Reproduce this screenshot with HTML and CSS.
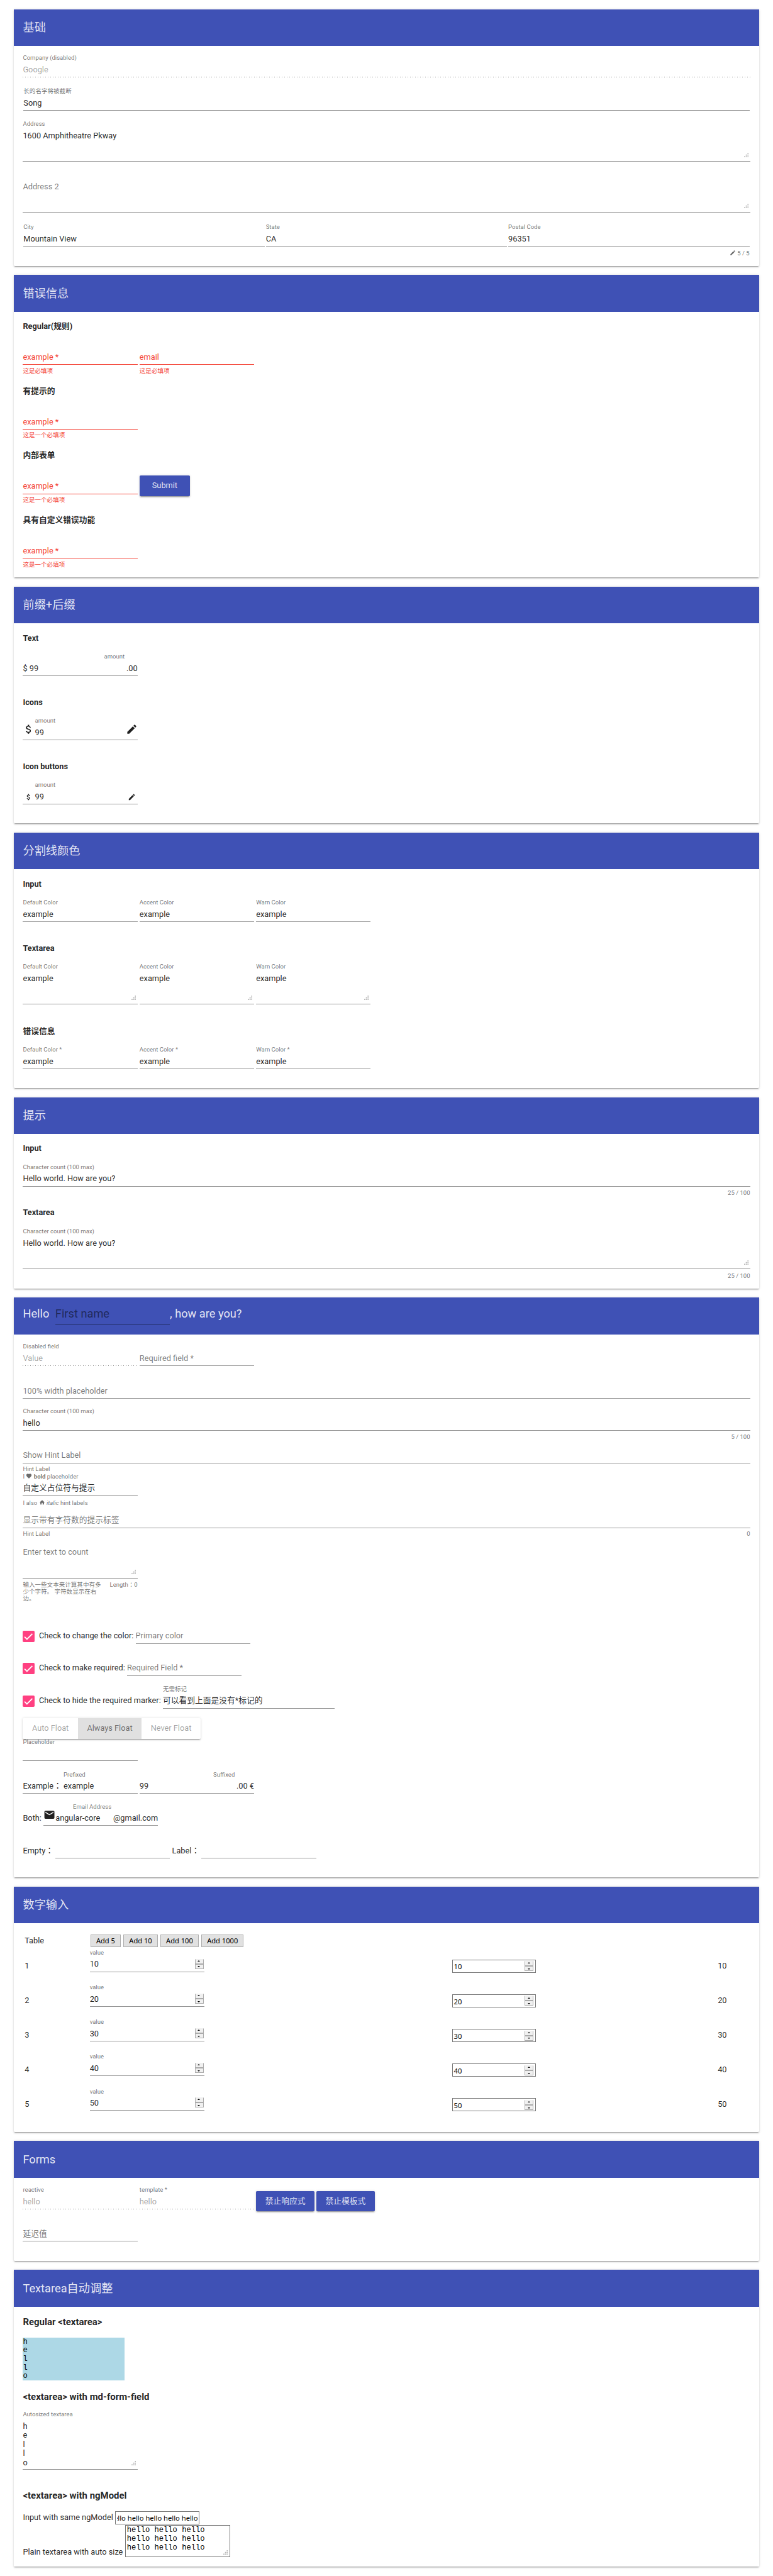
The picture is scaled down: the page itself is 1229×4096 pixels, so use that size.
FILE: index.html
```html
<!DOCTYPE html>
<html lang="zh-CN">
<head>
<meta charset="utf-8">
<title>Input</title>
<link rel="stylesheet" href="styles.css">
</head>
<body>
<svg class="defs" aria-hidden="true">
  <symbol id="edit" viewBox="0 0 24 24"><path d="M3 17.25V21h3.75L17.81 9.94l-3.75-3.75L3 17.25zM20.71 7.04a1 1 0 0 0 0-1.41l-2.34-2.34a1 1 0 0 0-1.41 0l-1.83 1.83 3.75 3.75 1.83-1.83z"/></symbol>
  <symbol id="money" viewBox="0 0 24 24"><path d="M11.8 10.9c-2.27-.59-3-1.2-3-2.15 0-1.09 1.01-1.85 2.7-1.85 1.78 0 2.44.85 2.5 2.1h2.21c-.07-1.72-1.12-3.3-3.21-3.81V3h-3v2.16c-1.94.42-3.5 1.68-3.5 3.61 0 2.31 1.91 3.46 4.7 4.13 2.5.6 3 1.48 3 2.41 0 .69-.49 1.79-2.7 1.79-2.06 0-2.87-.92-2.98-2.1h-2.2c.12 2.19 1.76 3.42 3.68 3.83V21h3v-2.15c1.95-.37 3.5-1.5 3.5-3.55 0-2.84-2.43-3.81-4.7-4.4z"/></symbol>
  <symbol id="heart" viewBox="0 0 24 24"><path d="M12 21.35l-1.45-1.32C5.4 15.36 2 12.28 2 8.5 2 5.42 4.42 3 7.5 3c1.74 0 3.41.81 4.5 2.09C13.09 3.81 14.76 3 16.5 3 19.58 3 22 5.42 22 8.5c0 3.78-3.4 6.86-8.55 11.54L12 21.35z"/></symbol>
  <symbol id="home" viewBox="0 0 24 24"><path d="M10 20v-6h4v6h5v-8h3L12 3 2 12h3v8z"/></symbol>
  <symbol id="mail" viewBox="0 0 24 24"><path d="M20 4H4a2 2 0 0 0-2 2v12a2 2 0 0 0 2 2h16a2 2 0 0 0 2-2V6a2 2 0 0 0-2-2zm0 4l-8 5-8-5V6l8 5 8-5v2z"/></symbol>
  <symbol id="check" viewBox="0 0 24 24"><path fill="none" stroke="#fff" stroke-width="2.4" d="M4.1 12.7L9 17.6 20.3 6.3"/></symbol>
  <symbol id="grip" viewBox="0 0 8 8"><path d="M6 0h2v2H6zM3 3h2v2H3zM6 3h2v2H6zM0 6h2v2H0zM3 6h2v2H3zM6 6h2v2H6z"/></symbol>
</svg>
<main class="page">

<section class="card basic">
  <h2>基础</h2>
  <div class="body">
    <div class="row h58"><div class="field wide disabled"><div class="box"><span class="label">Company (disabled)</span><span class="value">Google</span></div></div></div>
    <div class="row h57 cells"><div class="field wide"><div class="box"><span class="label">长的名字将被截断</span><span class="value">Song</span></div></div></div>
    <div class="row h89"><div class="field wide"><div class="box area"><span class="label">Address</span><span class="value">1600 Amphitheatre Pkway</span><svg class="grip"><use href="#grip"/></svg></div></div></div>
    <div class="row h91"><div class="field wide"><div class="box area"><span class="value ph">Address 2</span><svg class="grip"><use href="#grip"/></svg></div></div></div>
    <div class="row cells">
      <div class="field wide"><div class="box"><span class="label">City</span><span class="value">Mountain View</span></div></div>
      <div class="field wide"><div class="box"><span class="label">State</span><span class="value">CA</span></div></div>
      <div class="field wide"><div class="box"><span class="label">Postal Code</span><span class="value">96351</span></div><div class="hint end"><span><svg class="mini"><use href="#edit"/></svg> 5 / 5</span></div></div>
    </div>
  </div>
</section>

<section class="card errors">
  <h2>错误信息</h2>
  <div class="body">
    <h4>Regular(规则)</h4>
    <div class="row">
      <div class="field warn"><div class="box"><span class="value">example *</span></div><div class="hint">这是必填项</div></div>
      <div class="field warn"><div class="box"><span class="value">email</span></div><div class="hint">这是必填项</div></div>
    </div>
    <h4>有提示的</h4>
    <div class="row"><div class="field warn"><div class="box"><span class="value">example *</span></div><div class="hint">这是一个必填项</div></div></div>
    <h4>内部表单</h4>
    <div class="row"><div class="field warn"><div class="box"><span class="value">example *</span></div><div class="hint">这是一个必填项</div></div><button class="raised submit">Submit</button></div>
    <h4>具有自定义错误功能</h4>
    <div class="row"><div class="field warn"><div class="box"><span class="value">example *</span></div><div class="hint">这是一个必填项</div></div></div>
  </div>
</section>

<section class="card affixes">
  <h2>前缀+后缀</h2>
  <div class="body">
    <h4>Text</h4>
    <div class="row h75"><div class="field"><div class="box split"><span class="affix">$&nbsp;</span><div class="infix"><span class="label right">amount</span><span class="value">99</span></div><span class="affix">.00</span></div></div></div>
    <h4>Icons</h4>
    <div class="row h75"><div class="field"><div class="box split"><svg class="icon"><use href="#money"/></svg><div class="infix"><span class="label">amount</span><span class="value">99</span></div><svg class="icon"><use href="#edit"/></svg></div></div></div>
    <h4>Icon buttons</h4>
    <div class="row h75"><div class="field"><div class="box split"><svg class="icon small"><use href="#money"/></svg><div class="infix"><span class="label">amount</span><span class="value">99</span></div><svg class="icon small"><use href="#edit"/></svg></div></div></div>
  </div>
</section>

<section class="card dividers">
  <h2>分割线颜色</h2>
  <div class="body">
    <h4>Input</h4>
    <div class="row h75">
      <div class="field"><div class="box"><span class="label">Default Color</span><span class="value">example</span></div></div>
      <div class="field"><div class="box"><span class="label">Accent Color</span><span class="value">example</span></div></div>
      <div class="field"><div class="box"><span class="label">Warn Color</span><span class="value">example</span></div></div>
    </div>
    <h4>Textarea</h4>
    <div class="row h108">
      <div class="field"><div class="box area"><span class="label">Default Color</span><span class="value">example</span><svg class="grip"><use href="#grip"/></svg></div></div>
      <div class="field"><div class="box area"><span class="label">Accent Color</span><span class="value">example</span><svg class="grip"><use href="#grip"/></svg></div></div>
      <div class="field"><div class="box area"><span class="label">Warn Color</span><span class="value">example</span><svg class="grip"><use href="#grip"/></svg></div></div>
    </div>
    <h4>错误信息</h4>
    <div class="row">
      <div class="field"><div class="box"><span class="label">Default Color *</span><span class="value">example</span></div></div>
      <div class="field"><div class="box"><span class="label">Accent Color *</span><span class="value">example</span></div></div>
      <div class="field"><div class="box"><span class="label">Warn Color *</span><span class="value">example</span></div></div>
    </div>
  </div>
</section>

<section class="card hints">
  <h2>提示</h2>
  <div class="body">
    <h4>Input</h4>
    <div class="row h75"><div class="field wide"><div class="box"><span class="label">Character count (100 max)</span><span class="value">Hello world. How are you?</span></div><div class="hint end"><span>25 / 100</span></div></div></div>
    <h4>Textarea</h4>
    <div class="row"><div class="field wide"><div class="box area"><span class="label">Character count (100 max)</span><span class="value">Hello world. How are you?</span><svg class="grip"><use href="#grip"/></svg></div><div class="hint end"><span>25 / 100</span></div></div></div>
  </div>
</section>

<section class="card hello">
  <h2>Hello <span class="first-name">First name</span>, how are you?</h2>
  <div class="body">
    <div class="row h57">
      <div class="field disabled"><div class="box"><span class="label">Disabled field</span><span class="value">Value</span></div></div>
      <div class="field"><div class="box"><span class="value ph">Required field *</span></div></div>
    </div>
    <div class="row h56"><div class="field wide"><div class="box"><span class="value ph">100% width placeholder</span></div></div></div>
    <div class="row h57"><div class="field wide"><div class="box"><span class="label">Character count (100 max)</span><span class="value">hello</span></div><div class="hint end"><span>5 / 100</span></div></div></div>
    <div class="row h56"><div class="field wide"><div class="box"><span class="value ph">Show Hint Label</span></div><div class="hint">Hint Label</div></div></div>
    <div class="row h57"><div class="field"><div class="box"><span class="label low">I <svg class="mini"><use href="#heart"/></svg> <b>bold</b> placeholder</span><span class="value">自定义占位符与提示</span></div><div class="hint low">I also <svg class="mini"><use href="#home"/></svg> <i>italic</i> hint labels</div></div></div>
    <div class="row h56"><div class="field wide"><div class="box"><span class="value ph">显示带有字符数的提示标签</span></div><div class="hint"><span>Hint Label</span><span>0</span></div></div></div>
    <div class="row h146"><div class="field"><div class="box area"><span class="value ph">Enter text to count</span><svg class="grip"><use href="#grip"/></svg></div><div class="hint"><span class="wrap">输入一些文本来计算其中有多少个字符。 字符数显示在右边。</span><span>Length<span class="mid" lang="zh-TW">：</span>0</span></div></div></div>
    <div class="row check h56"><span class="tick"><svg><use href="#check"/></svg></span><span class="text">Check to change the color:</span><div class="field"><div class="box"><span class="value ph">Primary color</span></div></div></div>
    <div class="row check h57"><span class="tick"><svg><use href="#check"/></svg></span><span class="text">Check to make required:</span><div class="field"><div class="box"><span class="value ph">Required Field *</span></div></div></div>
    <div class="row check h56"><span class="tick"><svg><use href="#check"/></svg></span><span class="text">Check to hide the required marker:</span><div class="field long"><div class="box"><span class="label">无需标记</span><span class="value">可以看到上面是没有*标记的</span></div></div></div>
    <div class="toggle"><span>Auto Float</span><span class="on">Always Float</span><span>Never Float</span></div>
    <div class="row h57"><div class="field"><div class="box"><span class="label">Placeholder</span></div></div></div>
    <div class="row h56">
      <div class="field"><div class="box split"><span class="affix">Example<span class="mid" lang="zh-TW">：</span>&nbsp;</span><div class="infix"><span class="label">Prefixed</span><span class="value">example</span></div></div></div>
      <div class="field"><div class="box split"><div class="infix"><span class="label right">Suffixed</span><span class="value">99</span></div><span class="affix">.00 €</span></div></div>
    </div>
    <div class="row h57"><span class="text">Both:</span><div class="field"><div class="box split"><svg class="icon mail"><use href="#mail"/></svg><div class="infix"><span class="label right">Email Address</span><span class="value">angular-core</span></div><span class="affix">@gmail.com</span></div></div></div>
    <div class="row"><span class="text">Empty<span class="mid" lang="zh-TW">：</span></span><div class="field"><div class="box"></div></div><span class="text">Label<span class="mid" lang="zh-TW">：</span></span><div class="field"><div class="box"></div></div></div>
  </div>
</section>

<section class="card numbers">
  <h2>数字输入</h2>
  <div class="body">
    <div class="line head"><span>Table</span><span class="adds"><button>Add 5</button><button>Add 10</button><button>Add 100</button><button>Add 1000</button></span></div>
    <div class="line"><span class="num">1</span><div class="field"><div class="box"><span class="label">value</span><span class="value">10</span><span class="spin"></span></div></div><div class="native">10<span class="spin"></span></div><span class="num">10</span></div>
    <div class="line"><span class="num">2</span><div class="field"><div class="box"><span class="label">value</span><span class="value">20</span><span class="spin"></span></div></div><div class="native">20<span class="spin"></span></div><span class="num">20</span></div>
    <div class="line"><span class="num">3</span><div class="field"><div class="box"><span class="label">value</span><span class="value">30</span><span class="spin"></span></div></div><div class="native">30<span class="spin"></span></div><span class="num">30</span></div>
    <div class="line"><span class="num">4</span><div class="field"><div class="box"><span class="label">value</span><span class="value">40</span><span class="spin"></span></div></div><div class="native">40<span class="spin"></span></div><span class="num">40</span></div>
    <div class="line"><span class="num">5</span><div class="field"><div class="box"><span class="label">value</span><span class="value">50</span><span class="spin"></span></div></div><div class="native">50<span class="spin"></span></div><span class="num">50</span></div>
  </div>
</section>

<section class="card forms">
  <h2>Forms</h2>
  <div class="body">
    <div class="row h56">
      <div class="field disabled"><div class="box"><span class="label">reactive</span><span class="value">hello</span></div></div>
      <div class="field disabled"><div class="box"><span class="label">template *</span><span class="value">hello</span></div></div>
      <div class="actions"><button class="raised">禁止响应式</button><button class="raised">禁止模板式</button></div>
    </div>
    <div class="row"><div class="field"><div class="box"><span class="value ph">延迟值</span></div></div></div>
  </div>
</section>

<section class="card autosize">
  <h2>Textarea自动调整</h2>
  <div class="body">
    <h3>Regular &lt;textarea&gt;</h3>
    <pre class="blue">h
e
l
l
o</pre>
    <h3>&lt;textarea&gt; with md-form-field</h3>
    <div class="row h137"><div class="field"><div class="box tall"><span class="label">Autosized textarea</span><span class="value">h<br>e<br>l<br>l<br>o</span><svg class="grip"><use href="#grip"/></svg></div></div></div>
    <h3>&lt;textarea&gt; with ngModel</h3>
    <div class="plain"><span>Input with same ngModel</span><div class="native text-input"><span>hello hello hello hello hello</span></div></div>
    <div class="plain bottom"><span>Plain textarea with auto size</span><pre class="native multi">hello hello hello
hello hello hello
hello hello hello<svg class="grip"><use href="#grip"/></svg></pre></div>
  </div>
</section>

</main>
</body>
</html>
```
FILE: styles.css
```css
* { box-sizing: border-box; }
html, body { margin: 0; background: #fff; overflow: hidden; }
.defs { position: absolute; width: 0; height: 0; }

.page {
  zoom: 0.91103;
  width: 1349px;
  height: 4496px;
  padding: 16px 24px;
  display: flex;
  flex-direction: column;
  gap: 16px;
  font: 14px/16px Roboto, "Noto Sans CJK SC", sans-serif;
  color: rgba(0, 0, 0, .87);
}

/* Cards */
.card {
  flex: none;
  background: #fff;
  border-radius: 2px;
  box-shadow: 0 3px 1px -2px rgba(0,0,0,.2), 0 2px 2px 0 rgba(0,0,0,.14), 0 1px 5px 0 rgba(0,0,0,.12);
}
.basic { height: 448px; }
.errors { height: 528px; }
.affixes { height: 413px; }
.dividers { height: 446px; }
.hints { height: 334px; }
.hello { height: 1012px; }
.numbers { height: 428px; }
.forms { height: 209px; }
.autosize { height: 518px; }

h2 {
  margin: 0;
  height: 64px;
  padding: 0 16px;
  display: flex;
  align-items: center;
  background: #3f51b5;
  color: rgba(255, 255, 255, .87);
  font-size: 20px;
  font-weight: 400;
  line-height: 32px;
}
.body { padding: 16px 16px 0; }
h4 { margin: 0 0 17px; font-size: 14px; line-height: 20px; font-weight: 700; }
.errors h4 { margin-bottom: 18px; }
h3 { margin: 0; font-size: 16.4px; line-height: 20px; font-weight: 700; }

/* Rows */
.row { display: flex; gap: 3.5px; align-items: flex-start; height: 72px; }
.h56 { height: 56px; }
.h57 { height: 57px; }
.h58 { height: 58px; }
.h75 { height: 75px; }
.h89 { height: 89px; }
.h91 { height: 91px; }
.h108 { height: 108px; }
.h137 { height: 137px; }
.h146 { height: 146px; }
.errors .row { height: 74.67px; }
.cells { padding: 0 1px; gap: 2px; }

/* Form fields */
.field { flex: none; width: 200px; white-space: nowrap; }
.field.wide { flex: 1 1 0; }
.field.long { width: 300px; }
.box {
  position: relative;
  height: 39px;
  border-bottom: 1px solid #949494;
  display: flex;
  flex-direction: column;
}
.box.area { height: 71.5px; }
.box.tall { height: 102px; }
.label { flex: none; height: 18px; font-size: 10.5px; line-height: 12px; color: rgba(0, 0, 0, .58); }
.label.low { line-height: 13px; }
.label.right { align-self: flex-end; padding-right: 3px; }
.value { flex: none; line-height: 16px; }
.value:first-child { margin-top: 18px; }
.ph { color: rgba(0, 0, 0, .54); }
.disabled .value { color: rgba(0, 0, 0, .38); }
.disabled .box { border-bottom-color: transparent; }
.disabled .box::after {
  content: "";
  position: absolute;
  left: 0; right: 0; bottom: -1px;
  height: 1.1px;
  background: repeating-linear-gradient(to right, #808080 0 1.4px, transparent 1.4px 4.39px);
}
.warn .box { border-color: #f44336; }
.warn .value, .warn .hint { color: #f44336; }
.hint {
  display: flex;
  justify-content: space-between;
  margin-top: 5px;
  font-size: 10.5px;
  line-height: 12px;
  color: rgba(0, 0, 0, .58);
}
.hint.end { justify-content: flex-end; margin-top: 6px; }
.hint.low { display: block; margin-top: 7px; }
.wrap { width: 138px; white-space: normal; }
.mid { font-family: "Noto Sans CJK TC", sans-serif; line-height: 1; }
.mini { width: 11px; height: 11px; fill: currentColor; vertical-align: -1px; }
.grip { position: absolute; right: 3px; bottom: 7px; width: 8px; height: 8px; fill: #b4b4b4; }

/* Prefixes and suffixes */
.box.split { flex-direction: row; }
.infix { flex: 1; display: flex; flex-direction: column; }
.affix { padding-top: 18px; }
.icon { width: 21px; height: 21px; margin-top: 9px; fill: #212121; }
.icon.small { height: 14px; margin-top: 19px; }

/* Buttons */
.raised {
  border: 0;
  border-radius: 2px;
  height: 36px;
  padding: 0 16px;
  background: #3f51b5;
  color: rgba(255, 255, 255, .87);
  font: 14px/36px Roboto, "Noto Sans CJK SC", sans-serif;
  box-shadow: 0 3px 1px -2px rgba(0,0,0,.2), 0 2px 2px 0 rgba(0,0,0,.14), 0 1px 5px 0 rgba(0,0,0,.12);
}
.submit { width: 88px; margin-top: 7px; }
.actions { display: flex; gap: 3px; margin: 7px 0 0; }
.actions .raised { width: 102px; }

/* Greeting card */
.hello h2 { align-items: flex-start; padding-top: 12px; white-space: pre; }
.first-name {
  width: 200px;
  height: 36px;
  margin-left: 5.5px;
  border-bottom: 1px solid rgba(0, 0, 0, .42);
  color: rgba(0, 0, 0, .5);
}
.text { line-height: 16px; padding-top: 18px; }
.check { gap: 0; }
.check .text { margin-right: 3.5px; }
.tick { width: 20px; height: 20px; margin: 16px 8px 0 0; border-radius: 2px; background: #ff4081; }
.tick svg { display: block; width: 20px; height: 20px; }
.toggle {
  display: inline-flex;
  height: 36px;
  border-radius: 2px;
  line-height: 36px;
  color: rgba(0, 0, 0, .38);
  box-shadow: 0 3px 1px -2px rgba(0,0,0,.2), 0 2px 2px 0 rgba(0,0,0,.14), 0 1px 5px 0 rgba(0,0,0,.12);
  vertical-align: top;
}
.toggle span { padding: 0 16px; }
.toggle .on { background: #e0e0e0; color: rgba(0, 0, 0, .54); }

/* Number table */
.line {
  display: grid;
  grid-template-columns: 113.6px 632.4px 463.7px 1fr;
  height: 60.5px;
  padding-left: 3px;
  align-items: start;
}
.line.head { height: 30px; padding-top: 7px; }
.adds { display: flex; gap: 5px; margin: -3px 0 0 1.5px; }
.adds button {
  height: 21px;
  padding: 0 8.7px;
  border: 1px solid #adadad;
  background: #e1e1e1;
  color: #000;
  font: 12.2px/18px "Noto Sans", sans-serif;
}
.num { padding-top: 20.5px; }
.spin {
  position: absolute;
  right: 1px;
  top: 16px;
  width: 15px;
  height: 17.5px;
  border: 1px solid #ababab;
  border-top-color: #f0f0f0;
  background: linear-gradient(#f0f0f0 0 43%, #ababab 43% 57%, #f0f0f0 57%);
}
.spin::before, .spin::after {
  content: "";
  position: absolute;
  left: 3.5px;
  border: 3px solid transparent;
}
.spin::before { top: -1px; border-bottom: 3px solid #000; }
.spin::after { bottom: -1px; border-top: 3px solid #000; }
.native {
  position: relative;
  border: 1px solid #767676;
  color: #000;
  font: 12.3px/21px "Noto Sans", sans-serif;
}
.line .native { width: 146px; height: 23px; margin-top: 17px; padding: 1px 2px; }
.native .spin { top: 2px; right: 3px; }

/* Autosize card */
pre { margin: 0; font: 13.33px/15px "Liberation Mono", monospace; color: #000; }
.autosize .body { padding-top: 17px; }
.blue { width: 177px; height: 75px; padding-top: 1px; margin: 17px 0 18px; background: lightblue; }
.autosize .row { margin-top: 16px; }
.plain { display: flex; gap: 4px; align-items: center; margin-top: 17px; height: 24px; }
.text-input {
  width: 147px;
  height: 23px;
  padding: 0 2px;
  display: flex;
}
.text-input span { flex: 1; width: 0; display: flex; justify-content: flex-end; overflow: hidden; white-space: nowrap; }
.plain.bottom { height: 56px; margin: 0; align-items: flex-end; }
.plain.bottom > span { line-height: 16px; }
.multi { width: 183px; height: 56px; padding: 2px; font: 13.33px/15px "Liberation Mono", monospace; }
.multi .grip { bottom: 3px; }
```
